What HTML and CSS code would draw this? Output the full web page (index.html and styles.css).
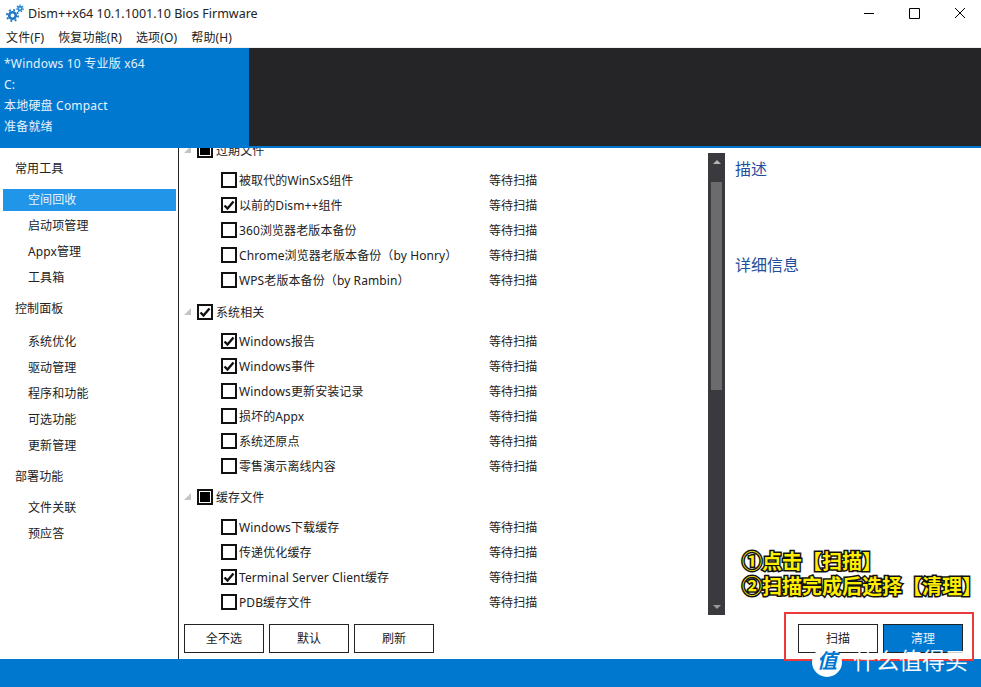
FILE: index.html
```html
<!DOCTYPE html>
<html lang="zh-CN">
<head>
<meta charset="UTF-8">
<title>Dism++x64 10.1.1001.10 Bios Firmware</title>
<link rel="stylesheet" href="styles.css">
</head>
<body>

<div class="window">
    <div class="titlebar">
        <svg class="app-icon" width="18" height="18" viewBox="0 0 18 18">
            <circle cx="6.5" cy="11.5" r="3.3" fill="none" stroke="#1f77c4" stroke-width="2.6"/>
            <circle cx="6.5" cy="11.5" r="5.6" fill="none" stroke="#1f77c4" stroke-width="1.8" stroke-dasharray="2 2.4"/>
            <circle cx="14" cy="4.5" r="1.8" fill="none" stroke="#2a86cf" stroke-width="1.8"/>
            <circle cx="14" cy="4.5" r="3.3" fill="none" stroke="#2a86cf" stroke-width="1.2" stroke-dasharray="1.5 1.4"/>
        </svg>
        <span class="title">Dism++x64 10.1.1001.10 Bios Firmware</span>
        <div class="winbtns">
            <svg width="10" height="10" viewBox="0 0 10 10"><path d="M0 5.5H10" stroke="#000" fill="none"/></svg>
            <svg width="11" height="11" viewBox="0 0 11 11"><path d="M.5.5H10.5V10.5H.5Z" stroke="#000" fill="none"/></svg>
            <svg width="10" height="10" viewBox="0 0 10 10"><path d="M0 0L10 10M10 0L0 10" stroke="#000" fill="none"/></svg>
        </div>
    </div>

    <div class="menubar">
        <span>文件(F)</span>
        <span>恢复功能(R)</span>
        <span>选项(O)</span>
        <span>帮助(H)</span>
    </div>

    <div class="header">
        <div class="sysinfo">
            <div>*Windows 10 专业版 x64</div>
            <div>C:</div>
            <div>本地硬盘 Compact</div>
            <div>准备就绪</div>
        </div>
        <div class="darkpane"></div>
    </div>

    <div class="main">
        <div class="sidebar">
            <div class="side-group">常用工具</div>
            <div class="side-item active">空间回收</div>
            <div class="side-item">启动项管理</div>
            <div class="side-item">Appx管理</div>
            <div class="side-item">工具箱</div>
            <div class="side-group wide">控制面板</div>
            <div class="side-item">系统优化</div>
            <div class="side-item">驱动管理</div>
            <div class="side-item">程序和功能</div>
            <div class="side-item">可选功能</div>
            <div class="side-item">更新管理</div>
            <div class="side-group">部署功能</div>
            <div class="side-item">文件关联</div>
            <div class="side-item">预应答</div>
        </div>

        <div class="content">
            <div class="scan-area">
                <div class="tree">
                    <div class="tree-clip">
                        <div class="group first"><i class="caret"></i><i class="box partial"></i><span>过期文件</span></div>
                        <div class="row"><i class="box"></i><span class="name">被取代的WinSxS组件</span><span class="state">等待扫描</span></div>
                        <div class="row"><i class="box checked"><svg viewBox="0 0 12 12"><path d="M1.5 6.5L4.5 9.5L10.5 2.5" /></svg></i><span class="name">以前的Dism++组件</span><span class="state">等待扫描</span></div>
                        <div class="row"><i class="box"></i><span class="name">360浏览器老版本备份</span><span class="state">等待扫描</span></div>
                        <div class="row"><i class="box"></i><span class="name">Chrome浏览器老版本备份（by Honry）</span><span class="state">等待扫描</span></div>
                        <div class="row"><i class="box"></i><span class="name">WPS老版本备份（by Rambin）</span><span class="state">等待扫描</span></div>

                        <div class="group"><i class="caret"></i><i class="box checked"><svg viewBox="0 0 12 12"><path d="M1.5 6.5L4.5 9.5L10.5 2.5" /></svg></i><span>系统相关</span></div>
                        <div class="row"><i class="box checked"><svg viewBox="0 0 12 12"><path d="M1.5 6.5L4.5 9.5L10.5 2.5" /></svg></i><span class="name">Windows报告</span><span class="state">等待扫描</span></div>
                        <div class="row"><i class="box checked"><svg viewBox="0 0 12 12"><path d="M1.5 6.5L4.5 9.5L10.5 2.5" /></svg></i><span class="name">Windows事件</span><span class="state">等待扫描</span></div>
                        <div class="row"><i class="box"></i><span class="name">Windows更新安装记录</span><span class="state">等待扫描</span></div>
                        <div class="row"><i class="box"></i><span class="name">损坏的Appx</span><span class="state">等待扫描</span></div>
                        <div class="row"><i class="box"></i><span class="name">系统还原点</span><span class="state">等待扫描</span></div>
                        <div class="row"><i class="box"></i><span class="name">零售演示离线内容</span><span class="state">等待扫描</span></div>

                        <div class="group tight"><i class="caret"></i><i class="box partial"></i><span>缓存文件</span></div>
                        <div class="row"><i class="box"></i><span class="name">Windows下载缓存</span><span class="state">等待扫描</span></div>
                        <div class="row"><i class="box"></i><span class="name">传递优化缓存</span><span class="state">等待扫描</span></div>
                        <div class="row"><i class="box checked"><svg viewBox="0 0 12 12"><path d="M1.5 6.5L4.5 9.5L10.5 2.5" /></svg></i><span class="name">Terminal Server Client缓存</span><span class="state">等待扫描</span></div>
                        <div class="row"><i class="box"></i><span class="name">PDB缓存文件</span><span class="state">等待扫描</span></div>
                    </div>
                </div>

                <div class="scrollbar">
                    <i class="arrow up"></i>
                    <div class="track"><div class="thumb"></div></div>
                    <i class="arrow down"></i>
                </div>

                <div class="details">
                    <div class="detail-title desc">描述</div>
                    <div class="detail-title">详细信息</div>
                </div>
            </div>

            <div class="actions">
                <div class="btn">全不选</div>
                <div class="btn">默认</div>
                <div class="btn">刷新</div>
                <div class="spacer"></div>
                <div class="btn">扫描</div>
                <div class="btn primary">清理</div>
            </div>
        </div>
    </div>

    <div class="footer"></div>

    <!-- annotations on top of the screenshot -->
    <div class="note">①点击【扫描】<br>②扫描完成后选择【清理】</div>
    <div class="redbox"></div>
    <div class="watermark">
        <span class="wm-logo">值</span>
        <span class="wm-text">什么值得买</span>
    </div>
</div>

</body>
</html>
```

FILE: styles.css
```css
body {
    margin: 0;
    padding: 0;
    background-color: #fff;
    font-family: "Noto Sans", "Noto Sans CJK SC", sans-serif;
    font-size: 12px;
    letter-spacing: 0.1px;
    color: #222;
}
.window {
    position: relative;
    width: 981px;
    height: 687px;
    overflow: hidden;
    display: flex;
    flex-direction: column;
}

/* title bar */
.titlebar {
    height: 26px;
    display: flex;
    align-items: center;
    padding-left: 6px;
    flex: none;
}
.app-icon {
    margin-right: 4px;
}
.title {
    font-size: 12.5px;
    letter-spacing: 0;
    color: #222;
}
.winbtns {
    margin-left: auto;
    display: flex;
    align-items: center;
    gap: 35px;
    padding-right: 16px;
}
.winbtns svg {
    display: block;
}
.menubar {
    height: 22px;
    flex: none;
    display: flex;
    gap: 14px;
    padding-left: 6px;
    align-items: center;
    font-size: 12px;
    letter-spacing: 0.15px;
    border-bottom: 1px solid #f0f0f0;
    box-sizing: border-box;
}

/* header */
.header {
    height: 100px;
    flex: none;
    display: flex;
    background-color: #0078d0;
}
.sysinfo {
    width: 249px;
    box-sizing: border-box;
    padding: 5px 0 0 4px;
    color: #e6f2fb;
    font-size: 12px;
    letter-spacing: 0.2px;
}
.sysinfo div {
    height: 21px;
    line-height: 21px;
}
.darkpane {
    flex: 1;
    height: 98px;
    background-color: #252528;
}

/* main */
.main {
    flex: 1;
    display: flex;
    min-height: 0;
}
.sidebar {
    width: 178px;
    flex: none;
    box-sizing: content-box;
    border-right: 1px solid #222;
    padding-top: 8px;
}
.side-group {
    height: 26px;
    line-height: 26px;
    padding-left: 15px;
    margin-bottom: 7px;
}
.side-group.wide {
    margin-bottom: 9px;
}
.side-item {
    height: 22px;
    line-height: 22px;
    margin: 0 2px 4px 3px;
    padding-left: 25px;
}
.side-item + .side-group {
    margin-top: 7px;
}
.side-item.active {
    background-color: #2196e8;
    color: #e8f4fd;
}

.content {
    flex: 1;
    display: flex;
    flex-direction: column;
    min-width: 0;
}
.scan-area {
    flex: 1;
    display: flex;
    min-height: 0;
}
.tree {
    width: 529px;
    flex: none;
    overflow: hidden;
}
.tree-clip {
    margin-top: -11px;
    padding-left: 5px;
}
.group {
    height: 25px;
    display: flex;
    align-items: center;
    margin: 7px 0 4px;
}
.group.first {
    margin: 0 0 5px;
}
.group.tight {
    margin: 6px 0 5px;
}
.group .box {
    margin-right: 3px;
}
.caret {
    width: 0;
    height: 0;
    margin-right: 6px;
    border-left: 7px solid transparent;
    border-bottom: 7px solid #c4c4c4;
}
.row {
    height: 25px;
    display: flex;
    align-items: center;
    padding-left: 37px;
}
.name {
    width: 250px;
    margin-left: 2px;
    white-space: nowrap;
}
.box {
    width: 12px;
    height: 12px;
    border: 2px solid #111;
    flex: none;
    display: block;
    background-color: #fff;
}
.box svg {
    display: block;
    width: 12px;
    height: 12px;
    fill: none;
    stroke: #111;
    stroke-width: 2.4;
}
.box.partial {
    background-color: #000;
    box-shadow: inset 0 0 0 1px #fff;
}

/* scroll bar */
.scrollbar {
    width: 17px;
    flex: none;
    margin-top: 5px;
    background-color: #3a3a3e;
    display: flex;
    flex-direction: column;
    align-items: center;
}
.track {
    flex: 1;
    width: 11px;
}
.thumb {
    width: 11px;
    height: 208px;
    margin-top: 18px;
    background-color: #6b6b6b;
}
.arrow {
    width: 0;
    height: 0;
    border-left: 4px solid transparent;
    border-right: 4px solid transparent;
    flex: none;
}
.arrow.up {
    margin-top: 7px;
    border-bottom: 4px solid #b5b5b5;
}
.arrow.down {
    margin-bottom: 6px;
    border-top: 4px solid #9a9a9a;
}

/* details */
.details {
    padding: 9px 0 0 10px;
}
.detail-title {
    font-size: 16px;
    letter-spacing: 0;
    line-height: 24px;
    color: #1f4e9c;
}
.desc {
    margin-bottom: 72px;
}

/* buttons */
.actions {
    height: 44px;
    flex: none;
    display: flex;
    gap: 5px;
    padding: 9px 18px 0 5px;
    box-sizing: border-box;
}
.spacer {
    flex: 1;
}
.btn {
    width: 78px;
    height: 27px;
    line-height: 27px;
    border: 1px solid #222;
    text-align: center;
    background-color: #fff;
}
.btn.primary {
    background-color: #0078d0;
    color: #e6f2fb;
}

.footer {
    height: 28px;
    flex: none;
    background-color: #0078d0;
}

/* overlays */
.note {
    position: absolute;
    left: 742px;
    top: 549px;
    font-size: 20px;
    line-height: 25px;
    letter-spacing: 0;
    font-weight: 700;
    color: #ffee00;
    -webkit-text-stroke: 3px #111;
    paint-order: stroke fill;
    white-space: nowrap;
}
.redbox {
    position: absolute;
    left: 784px;
    top: 612px;
    width: 186px;
    height: 45px;
    border: 2px solid #ea3a3a;
}
.watermark {
    position: absolute;
    left: 812px;
    top: 647px;
    display: flex;
    align-items: center;
    gap: 11px;
}
.wm-logo {
    width: 30px;
    height: 30px;
    line-height: 28px;
    border-radius: 50%;
    background-color: #fff;
    color: #0078d0;
    text-align: center;
    font-size: 20px;
    font-style: italic;
    font-weight: 700;
}
.wm-text {
    font-size: 23px;
    letter-spacing: 0;
    color: #fff;
    opacity: 0.95;
    white-space: nowrap;
    line-height: 26px;
    margin-top: -4px;
}
```
